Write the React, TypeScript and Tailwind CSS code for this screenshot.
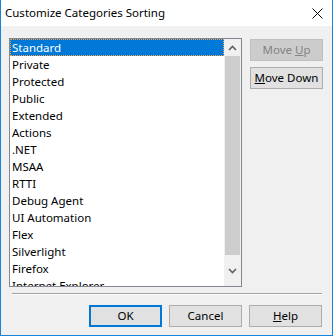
import React from 'react';

const items = [
  'Standard',
  'Private',
  'Protected',
  'Public',
  'Extended',
  'Actions',
  '.NET',
  'MSAA',
  'RTTI',
  'Debug Agent',
  'UI Automation',
  'Flex',
  'Silverlight',
  'Firefox',
  'Internet Explorer',
];

const font = { fontFamily: '"Segoe UI", "Noto Sans", sans-serif' };

function Btn({
  children,
  disabled,
  primary,
}: {
  children: React.ReactNode;
  disabled?: boolean;
  primary?: boolean;
}) {
  let cls = 'w-[73px] h-[22px] flex items-center justify-center text-[11.5px] leading-none ';
  if (disabled) cls += 'bg-[#cccccc] border border-[#bfbfbf] text-[#838383]';
  else if (primary) cls += 'bg-[#e1e1e1] border-2 border-[#0078d7] text-black';
  else cls += 'bg-[#e1e1e1] border border-[#adadad] text-black';
  return <div className={cls}>{children}</div>;
}

export default function App() {
  return (
    <div
      className="w-[333px] h-[336px] flex flex-col border-x border-b border-[#1883d7] bg-[#f0f0f0] overflow-hidden"
      style={font}
    >
      {/* title bar */}
      <div className="h-[26px] bg-white flex items-center justify-between pl-[4px] pr-[9px] shrink-0">
        <span className="text-[11.5px] text-black">Customize Categories Sorting</span>
        <svg width="11" height="11" viewBox="0 0 11 11">
          <path d="M0.5 0.5 L10.5 10.5 M10.5 0.5 L0.5 10.5" stroke="#000" strokeWidth="1" />
        </svg>
      </div>

      <div className="flex pt-[12px] pl-[8px]">
        {/* list box */}
        <div className="w-[233px] h-[249px] border border-[#828790] bg-white flex">
          <div className="flex-1 overflow-hidden">
            {items.map((it, i) =>
              i === 0 ? (
                <div
                  key={it}
                  className="h-[17px] bg-[#0078d7] text-white text-[11.5px] flex items-center pl-[1px] border border-dotted border-[#f5a043]"
                >
                  {it}
                </div>
              ) : (
                <div key={it} className="h-[17px] text-black text-[11.5px] flex items-center pl-[2px]">
                  {it}
                </div>
              )
            )}
          </div>
          {/* scrollbar */}
          <div className="w-[17px] bg-[#f0f0f0] flex flex-col">
            <div className="h-[17px] flex items-center justify-center">
              <svg width="9" height="6" viewBox="0 0 9 6">
                <path d="M1 5 L4.5 1.5 L8 5" stroke="#606060" strokeWidth="1.6" fill="none" />
              </svg>
            </div>
            <div className="h-[199px] bg-[#cdcdcd] mx-[1px]" />
            <div className="flex-1 flex items-center justify-center">
              <svg width="9" height="6" viewBox="0 0 9 6">
                <path d="M1 1 L4.5 4.5 L8 1" stroke="#606060" strokeWidth="1.6" fill="none" />
              </svg>
            </div>
          </div>
        </div>

        {/* side buttons */}
        <div className="ml-[8px] mt-[1px] flex flex-col gap-[6px]">
          <Btn disabled>
            Move&nbsp;<span className="underline">U</span>p
          </Btn>
          <Btn>
            <span className="underline">M</span>ove Down
          </Btn>
        </div>
      </div>

      <div className="ml-[11px] w-[310px] mt-[6px]">
        <div className="h-px bg-[#a0a0a0]" />
        <div className="h-px bg-white" />
      </div>

      <div className="flex justify-end gap-[7px] pr-[10px] mt-[10px]">
        <Btn primary>OK</Btn>
        <Btn>Cancel</Btn>
        <Btn>
          <span className="underline">H</span>elp
        </Btn>
      </div>
    </div>
  );
}
